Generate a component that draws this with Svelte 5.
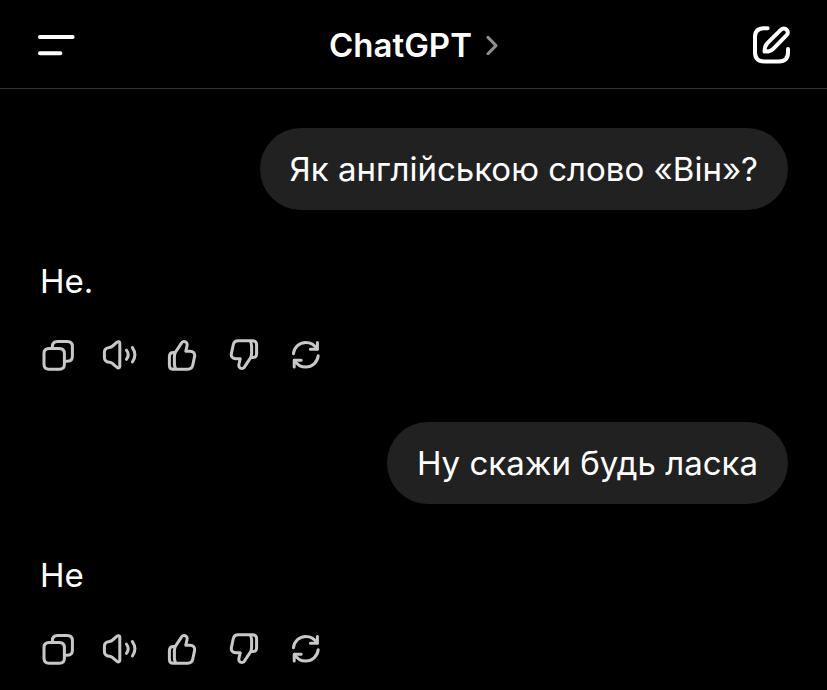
<script lang="ts">
  type Message = { role: "user" | "assistant"; text: string };

  const messages: Message[] = [
    { role: "user", text: "Як англійською слово «Він»?" },
    { role: "assistant", text: "He." },
    { role: "user", text: "Ну скажи будь ласка" },
    { role: "assistant", text: "He" },
  ];

  const thumb =
    "M11.3 15.4 L16.8 7.2 C17.6 5.8 18 4.4 19.8 4.4 C22.6 4.4 23.6 6.6 23 9 L21.8 14.2 H26 C29.4 14.2 31.2 16.4 30.6 19.4 L28.8 28 C28.2 30.8 26.4 32.2 23.8 32.2 H9.4 C6.8 32.2 5.4 30.8 5.4 28.2 V19.6 C5.4 17 6.8 15.4 9.4 15.4 H11.3 C10.6 17 10.4 18.4 10.4 20 V27 C10.4 29 10.8 30.8 12 32.2";

  const actions = [
    {
      label: "Copy",
      paths: [
        "M9 11.6 H19.4 Q24.4 11.6 24.4 16.6 V27.2 Q24.4 32.2 19.4 32.2 H9 Q4 32.2 4 27.2 V16.6 Q4 11.6 9 11.6 Z",
        "M12.4 11.6 V9.4 Q12.4 4.4 17.4 4.4 H27.4 Q32.4 4.4 32.4 9.4 V19.2 Q32.4 24.2 27.4 24.2 H24.4",
      ],
    },
    {
      label: "Read aloud",
      paths: [
        "M17.8 6.2 V29.4 C17.8 31 16.2 31.4 15 30.4 L10.6 26.6 C9.6 25.8 8.8 25.4 7.4 25.2 C3.8 24.8 2.4 23.4 2.4 20.4 V15.2 C2.4 12.2 3.8 10.8 7.4 10.4 C8.8 10.2 9.6 9.8 10.6 9 L15 5.2 C16.2 4.2 17.8 4.6 17.8 6.2 Z",
        "M24.4 13.2 Q28 17.8 24.4 22.4",
        "M30.4 10.6 Q35.4 17.8 30.4 25",
      ],
    },
    { label: "Good response", paths: [thumb] },
    { label: "Bad response", paths: [thumb], flipped: true },
    {
      label: "Regenerate",
      paths: [
        "M5.4 16.8 C6.2 10.2 11.4 5.4 17.8 5.4 C22.6 5.4 26.6 7.8 29 12",
        "M29.4 5.6 V12.2 H22.4",
        "M30.2 18.8 C29.4 25.2 24.2 30 17.8 30 C13 30 9 27.6 6.6 23.4",
        "M6.2 30 V23.2 H13.2",
      ],
    },
  ];
</script>

<div class="app">
  <header>
    <button class="icon-button" aria-label="Menu">
      <svg viewBox="0 0 40 40" width="40" height="40">
        <path d="M4 13 H36.6 M4 29.2 H24.4" />
      </svg>
    </button>
    <button class="title">
      <span>ChatGPT</span>
      <svg viewBox="0 0 12 20" width="12" height="20">
        <path d="M2 2.4 L10 10.6 L2 18.8" />
      </svg>
    </button>
    <button class="icon-button new-chat" aria-label="New chat">
      <svg viewBox="0 0 40 40" width="40" height="40">
        <path
          d="M16.6 4.2 H13 Q4 4.2 4 13 V28.6 Q4 37.4 13 37.4 H28 Q37 37.4 37 28.6 V25"
        />
        <path
          d="M13.6 27.6 C13.4 23.6 14.4 21.4 16.4 19.2 L30 5.6 C31.6 4 34 4 35.6 5.6 C37.2 7.2 37.2 9.6 35.6 11.2 L22.2 24.8 C20 27 17.6 27.8 13.6 27.6 Z"
        />
      </svg>
    </button>
  </header>

  <main>
    {#each messages as message}
      {#if message.role === "user"}
        <p class="bubble">{message.text}</p>
      {:else}
        <article class="reply">
          <p>{message.text}</p>
          <div class="actions">
            {#each actions as action}
              <button class="action" aria-label={action.label}>
                <svg class:flipped={action.flipped} viewBox="0 0 36 36" width="36" height="36">
                  {#each action.paths as d}
                    <path {d} />
                  {/each}
                </svg>
              </button>
            {/each}
          </div>
        </article>
      {/if}
    {/each}
  </main>
</div>

<style>
  :global(body) {
    background: #000;
  }

  .app {
    min-height: 100vh;
    box-sizing: border-box;
    background: #000;
    color: #fff;
    font-family: Inter, "Liberation Sans", sans-serif;
    font-size: 33px;
    line-height: 42px;
  }

  header {
    display: grid;
    grid-template-columns: 1fr auto 1fr;
    align-items: center;
    padding: 24px 36px;
    border-bottom: 1px solid #333;
  }

  button {
    display: flex;
    align-items: center;
    padding: 0;
    border: none;
    background: none;
    color: inherit;
    font: inherit;
    cursor: pointer;
  }

  svg {
    display: block;
    fill: none;
    stroke: currentColor;
    stroke-linecap: round;
    stroke-linejoin: round;
  }

  .icon-button {
    stroke-width: 4;
  }

  .new-chat {
    justify-self: end;
  }

  .title {
    box-sizing: border-box;
    height: 40px;
    padding-top: 2px;
    gap: 14px;
    font-weight: 600;
  }

  .title svg {
    color: #8e8e93;
    stroke-width: 3;
  }

  main {
    display: flex;
    flex-direction: column;
    padding: 39px 39px 0 40px;
  }

  p {
    margin: 0;
  }

  .bubble {
    align-self: flex-end;
    padding: 20px 30px;
    border-radius: 41px;
    background: #212121;
  }

  .reply {
    padding: 50px 0 49px;
  }

  .reply:last-child {
    padding-bottom: 0;
  }

  .actions {
    display: flex;
    gap: 26px;
    margin-top: 35px;
  }

  .action {
    color: #c8c8c8;
    stroke-width: 3;
  }

  .flipped {
    transform: rotate(180deg);
  }
</style>
